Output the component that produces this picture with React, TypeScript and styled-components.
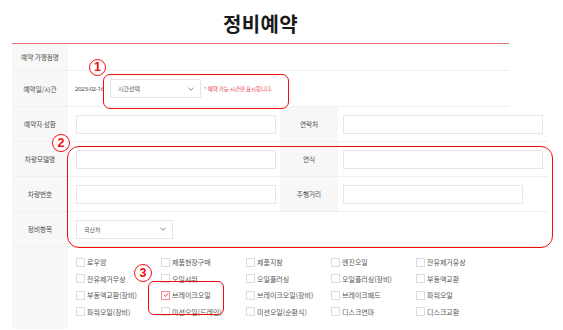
import React from "react";
import styled, { createGlobalStyle } from "styled-components";

const Global = createGlobalStyle`
  html, body { margin: 0; padding: 0; background: #fff; }
  body { font-family: "Noto Sans CJK KR", "Noto Sans", sans-serif; color: #444; }
`;

const Page = styled.div`
  position: relative;
  width: 563px;
  height: 330px;
  overflow: hidden;
  background: #fff;
`;

const Title = styled.h1`
  margin: 0;
  width: 497px;
  margin-left: 12px;
  height: 44px;
  display: flex;
  align-items: center;
  justify-content: center;
  font-size: 20px;
  font-weight: 700;
  color: #1a1a1a;
  letter-spacing: 0.3px;
  border-bottom: 1px solid #e57070;
  box-sizing: border-box;
  padding-top: 4px;
`;

const Form = styled.div`
  margin-left: 12px;
  display: flex;
  flex-direction: column;
`;

const Row = styled.div<{ $h: number; $w?: number }>`
  display: flex;
  height: ${(p) => p.$h}px;
  width: ${(p) => p.$w ?? 536}px;
  border-bottom: 1px solid #efefef;
  box-sizing: border-box;
`;

const Label = styled.div<{ $w?: number }>`
  width: ${(p) => p.$w ?? 56}px;
  flex: none;
  background: #f7f7f7;
  display: flex;
  align-items: center;
  justify-content: center;
  font-size: 6.6px;
  color: #4a4a4a;
  white-space: nowrap;
`;

const Cell = styled.div<{ $w?: number; $pl?: number }>`
  ${(p) => (p.$w ? `width: ${p.$w}px; flex: none;` : "flex: 1;")}
  display: flex;
  align-items: center;
  padding-left: ${(p) => p.$pl ?? 8}px;
  box-sizing: border-box;
`;

const Input = styled.div<{ $w: number }>`
  width: ${(p) => p.$w}px;
  height: 19px;
  border: 1px solid #e6e6e6;
  box-sizing: border-box;
  background: #fff;
`;

const DateText = styled.span`
  font-family: "Noto Sans", sans-serif;
  font-size: 6px;
  letter-spacing: -0.25px;
  color: #444;
  width: 35px;
  flex: none;
  white-space: nowrap;
`;

const Select = styled.div<{ $w: number }>`
  width: ${(p) => p.$w}px;
  height: 19px;
  flex: none;
  border: 1px solid #e6e6e6;
  box-sizing: border-box;
  background: #fff;
  display: flex;
  align-items: center;
  justify-content: space-between;
  padding: 0 6px 0 7px;
  font-size: 6px;
  color: #555;
`;

const Note = styled.span`
  font-size: 5.4px;
  color: #e8394d;
  margin-left: 3px;
  white-space: nowrap;
`;

const CheckArea = styled.div`
  display: flex;
  height: 82px;
  width: 536px;
`;

const CheckGrid = styled.div`
  display: grid;
  grid-template-columns: repeat(5, 85px);
  grid-auto-rows: 16.5px;
  padding: 7px 0 0 8px;
  align-content: start;
`;

const Item = styled.div`
  display: flex;
  align-items: center;
  gap: 2px;
  font-size: 7px;
  color: #555;
  white-space: nowrap;
`;

const Box = styled.span<{ $on?: boolean }>`
  width: 7px;
  height: 7px;
  border: 1px solid ${(p) => (p.$on ? "#f08c96" : "#dcdcdc")};
  background: #fff;
  flex: none;
  display: flex;
  align-items: center;
  justify-content: center;
`;

const Frame = styled.div<{ $x: number; $y: number; $w: number; $h: number; $r: number }>`
  position: absolute;
  left: ${(p) => p.$x}px;
  top: ${(p) => p.$y}px;
  width: ${(p) => p.$w}px;
  height: ${(p) => p.$h}px;
  border: 1.6px solid #f20d0d;
  border-radius: ${(p) => p.$r}px;
  box-sizing: border-box;
  pointer-events: none;
`;

const Badge = styled.div<{ $x: number; $y: number; $d: number }>`
  position: absolute;
  left: ${(p) => p.$x - p.$d / 2}px;
  top: ${(p) => p.$y - p.$d / 2}px;
  width: ${(p) => p.$d}px;
  height: ${(p) => p.$d}px;
  border: 1.6px solid #f20d0d;
  border-radius: 50%;
  box-sizing: border-box;
  background: #fff;
  color: #f20d0d;
  font-family: "Liberation Sans", Arial, sans-serif;
  font-weight: 700;
  font-size: 12.5px;
  display: flex;
  align-items: center;
  justify-content: center;
  line-height: 1;
`;

const Chevron = () => (
  <svg width="6" height="4" viewBox="0 0 6 4">
    <path d="M0.5 0.8 L3 3.2 L5.5 0.8" fill="none" stroke="#777" strokeWidth="0.9" />
  </svg>
);

const Check = () => (
  <svg width="6" height="6" viewBox="0 0 6 6">
    <path d="M1 3 L2.5 4.5 L5 1.3" fill="none" stroke="#e8394d" strokeWidth="1" />
  </svg>
);

const items = [
  "로우암", "제품현장구매", "제품지참", "엔진오일", "잔유제거유상",
  "잔유제거무상", "오일샤워", "오일플러싱", "오일플러싱(장비)", "부동액교환",
  "부동액교환(장비)", "브레이크오일", "브레이크오일(장비)", "브레이크패드", "파워오일",
  "파워오일(장비)", "미션오일(드레인)", "미션오일(순환식)", "디스크연마", "디스크교환",
];

export default function App() {
  return (
    <Page>
      <Global />
      <Title>정비예약</Title>
      <Form>
        <Row $h={27} $w={497}>
          <Label>예약 가맹점명</Label>
          <Cell />
        </Row>
        <Row $h={36} $w={497}>
          <Label>예약일/시간</Label>
          <Cell $pl={7}>
            <DateText>2023-02-16</DateText>
            <Select $w={91}>
              <span>시간선택</span>
              <Chevron />
            </Select>
            <Note>* 예약 가능 시간만 표시됩니다.</Note>
          </Cell>
        </Row>
        <Row $h={35}>
          <Label>예약자 성함</Label>
          <Cell $w={212}><Input $w={200} /></Cell>
          <Label $w={58}>연락처</Label>
          <Cell $pl={5}><Input $w={200} /></Cell>
        </Row>
        <Row $h={35}>
          <Label>차량모델명</Label>
          <Cell $w={212}><Input $w={200} /></Cell>
          <Label $w={58}>연식</Label>
          <Cell $pl={5}><Input $w={200} /></Cell>
        </Row>
        <Row $h={35}>
          <Label>차량번호</Label>
          <Cell $w={212}><Input $w={200} /></Cell>
          <Label $w={58}>주행거리</Label>
          <Cell $pl={5}><Input $w={180} /></Cell>
        </Row>
        <Row $h={35}>
          <Label>정비항목</Label>
          <Cell>
            <Select $w={97}>
              <span>국산차</span>
              <Chevron />
            </Select>
          </Cell>
        </Row>
        <CheckArea>
          <Label />
          <CheckGrid>
            {items.map((t) => (
              <Item key={t}>
                <Box $on={t === "브레이크오일"}>{t === "브레이크오일" && <Check />}</Box>
                {t}
              </Item>
            ))}
          </CheckGrid>
        </CheckArea>
      </Form>

      <Frame $x={103} $y={74} $w={186} $h={35} $r={7} />
      <Badge $x={97.5} $y={67} $d={17}>1</Badge>
      <Frame $x={67} $y={146} $w={486} $h={102} $r={12} />
      <Badge $x={61} $y={143} $d={18}>2</Badge>
      <Frame $x={148} $y={281} $w={76} $h={34} $r={6} />
      <Badge $x={143} $y={273} $d={18}>3</Badge>
    </Page>
  );
}
